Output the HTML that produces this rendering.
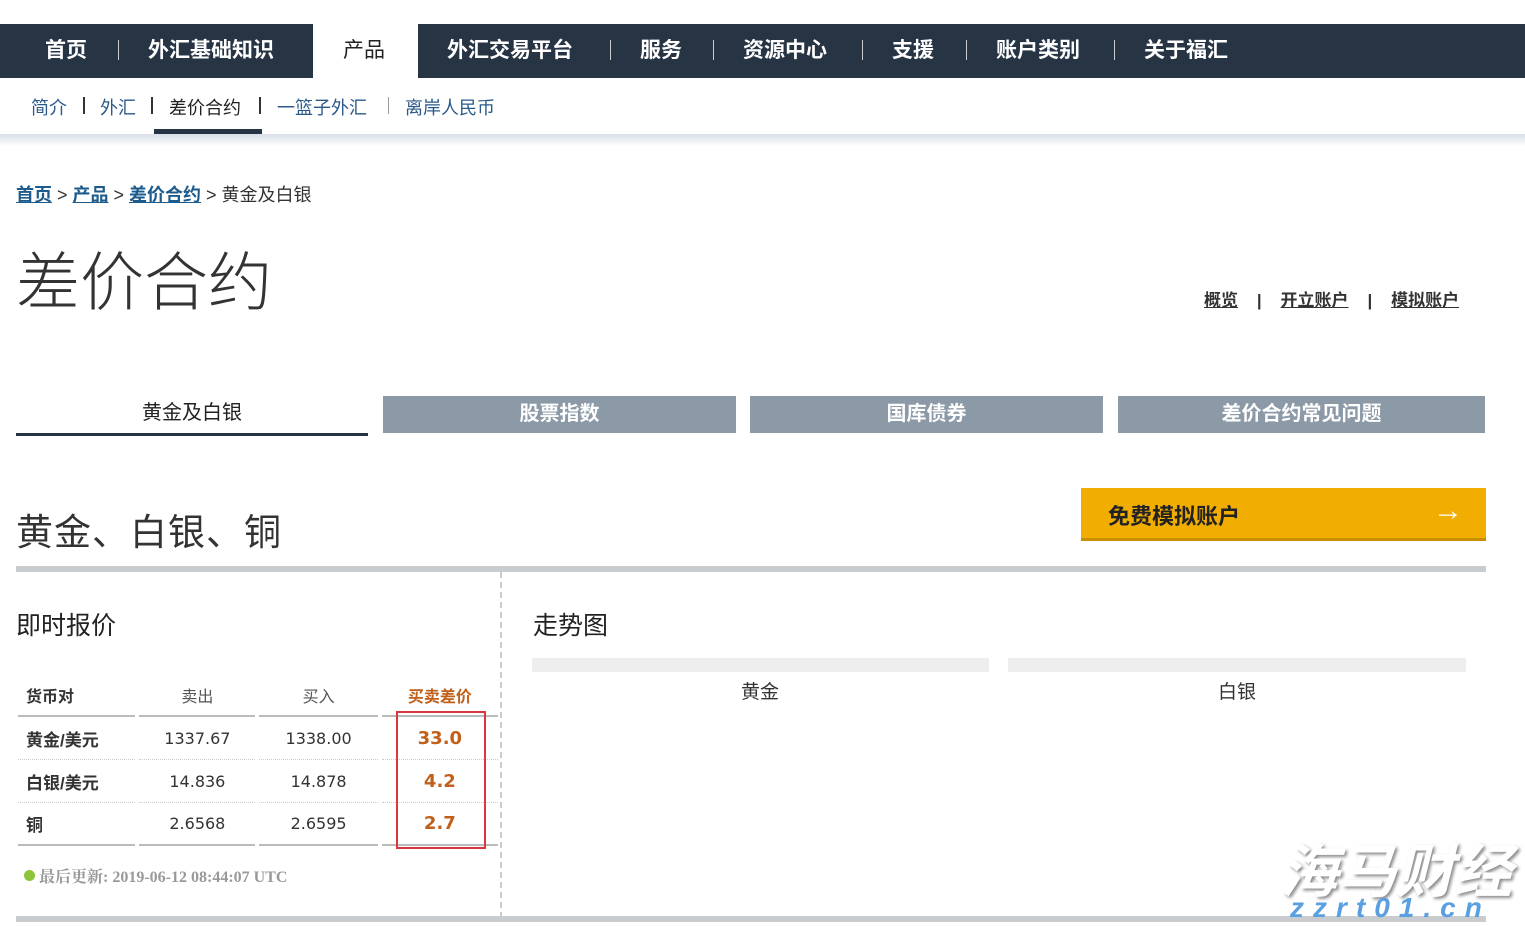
<!DOCTYPE html><html><head><meta charset="utf-8"><style>
*{margin:0;padding:0;box-sizing:border-box}
body{width:1525px;height:926px;overflow:hidden;background:#fff;font-family:"Liberation Sans","Noto Sans CJK SC",sans-serif;position:relative;color:#333}
.a{position:absolute;white-space:nowrap}
.nav{position:absolute;left:0;top:24px;width:1525px;height:54px;background:#263444}
.nv{position:absolute;top:24px;height:54px;line-height:54px;color:#fff;font-size:21px;font-weight:bold}
.sep{position:absolute;top:40px;width:1px;height:20px;background:#ccc}
.sub{position:absolute;top:94px;font-size:18px;color:#2b5a8a}
.ss{position:absolute;top:97px;width:2px;height:17px;background:#333}
.bc{font-size:18px;top:181px}
.bc u{color:#1c5b8c;font-weight:bold}
.tab{position:absolute;top:396px;height:37px;background:#8c9aa8;color:#fff;font-size:20px;font-weight:bold;text-align:center;line-height:37px}
td{font-size:16px;text-align:center;height:43px;padding:0}
.n{font-family:"DejaVu Sans",sans-serif;font-size:16px}
.o{color:#c0601a;font-weight:bold;font-family:"DejaVu Sans",sans-serif;font-size:18px}
</style></head><body>
<div class="nav"></div>
<div style="position:absolute;left:313px;top:24px;width:105px;height:54px;background:#fff"></div>
<div class="nv" style="left:45px">首页</div><div class="sep" style="left:118px"></div>
<div class="nv" style="left:148px">外汇基础知识</div>
<div class="nv" style="left:343px;color:#222;font-weight:normal">产品</div>
<div class="nv" style="left:447px">外汇交易平台</div><div class="sep" style="left:610px"></div>
<div class="nv" style="left:640px">服务</div><div class="sep" style="left:713px"></div>
<div class="nv" style="left:743px">资源中心</div><div class="sep" style="left:862px"></div>
<div class="nv" style="left:892px">支援</div><div class="sep" style="left:966px"></div>
<div class="nv" style="left:996px">账户类别</div><div class="sep" style="left:1114px"></div>
<div class="nv" style="left:1144px">关于福汇</div>
<div class="sub" style="left:31px">简介</div><div class="ss" style="left:83px"></div>
<div class="sub" style="left:100px">外汇</div><div class="ss" style="left:151px"></div>
<div class="sub" style="left:169px;color:#222">差价合约</div><div class="ss" style="left:259px"></div>
<div class="sub" style="left:277px">一篮子外汇</div><div class="ss" style="left:388px;width:1px;background:#999"></div>
<div class="sub" style="left:405px">离岸人民币</div>
<div style="position:absolute;left:154px;top:129px;width:108px;height:5px;background:#263444"></div>
<div style="position:absolute;left:0;top:134px;width:1525px;height:12px;background:linear-gradient(#d8dfe6,#fff)"></div>
<div class="a bc" style="left:16px"><u>首页</u> &gt; <u>产品</u> &gt; <u>差价合约</u> &gt; 黄金及白银</div>
<div class="a" style="left:16px;top:232px;font-size:64px;font-weight:300;color:#333">差价合约</div>
<div class="a" style="left:1204px;top:286px;font-size:17px;font-weight:bold;color:#333"><u>概览</u> &nbsp;&nbsp; | &nbsp;&nbsp; <u>开立账户</u> &nbsp;&nbsp; | &nbsp;&nbsp; <u>模拟账户</u></div>
<div class="a" style="left:16px;top:396px;width:352px;text-align:center;font-size:20px;line-height:35px;color:#222">黄金及白银</div>
<div style="position:absolute;left:16px;top:433px;width:352px;height:3px;background:#263444"></div>
<div class="tab" style="left:383px;width:353px">股票指数</div>
<div class="tab" style="left:750px;width:353px">国库债券</div>
<div class="tab" style="left:1118px;width:367px">差价合约常见问题</div>
<div class="a" style="left:16px;top:502px;font-size:37px;color:#333;letter-spacing:1px">黄金、白银、铜</div>
<div style="position:absolute;left:1081px;top:488px;width:405px;height:53px;background:#f2ae00;border-bottom:3px solid #c98f00"></div>
<div class="a" style="left:1108px;top:499px;font-size:22px;font-weight:bold;color:#222">免费模拟账户</div>
<div class="a" style="left:1433px;top:494px;font-size:30px;font-weight:bold;color:#fff">→</div>
<div style="position:absolute;left:16px;top:566px;width:1470px;height:6px;background:#c9cccf"></div>
<div style="position:absolute;left:500px;top:572px;height:346px;border-left:2px dashed #ccc"></div>
<div style="position:absolute;left:16px;top:916px;width:1470px;height:6px;background:#c9cccf"></div>
<div class="a" style="left:16px;top:606px;font-size:25px;color:#222">即时报价</div>
<div class="a" style="left:533px;top:606px;font-size:25px;color:#222">走势图</div>
<table style="position:absolute;left:14px;top:674px;width:488px;border-collapse:separate;border-spacing:4px 0;table-layout:fixed">
<colgroup><col style="width:117px"><col style="width:116px"><col style="width:118px"><col style="width:116px"></colgroup>
<tr><td style="text-align:left;padding-left:8px;font-weight:bold;border-bottom:2px solid #bbb">货币对</td><td style="border-bottom:2px solid #bbb;color:#555">卖出</td><td style="border-bottom:2px solid #bbb;color:#555">买入</td><td style="border-bottom:2px solid #bbb;color:#c0601a;font-weight:bold">买卖差价</td></tr>
<tr><td style="text-align:left;padding-left:8px;font-weight:bold;border-bottom:1px dotted #ccc;font-size:17px">黄金/美元</td><td class="n" style="border-bottom:1px dotted #ccc">1337.67</td><td class="n" style="border-bottom:1px dotted #ccc">1338.00</td><td class="o" style="border-bottom:1px dotted #ccc">33.0</td></tr>
<tr><td style="text-align:left;padding-left:8px;font-weight:bold;border-bottom:1px dotted #ccc;font-size:17px">白银/美元</td><td class="n" style="border-bottom:1px dotted #ccc">14.836</td><td class="n" style="border-bottom:1px dotted #ccc">14.878</td><td class="o" style="border-bottom:1px dotted #ccc">4.2</td></tr>
<tr><td style="text-align:left;padding-left:8px;font-weight:bold;border-bottom:2px solid #bbb;font-size:17px">铜</td><td class="n" style="border-bottom:2px solid #bbb">2.6568</td><td class="n" style="border-bottom:2px solid #bbb">2.6595</td><td class="o" style="border-bottom:2px solid #bbb">2.7</td></tr>
</table>
<div style="position:absolute;left:396px;top:711px;width:90px;height:138px;border:2px solid #d9363e"></div>
<div style="position:absolute;left:24px;top:870px;width:11px;height:11px;border-radius:50%;background:#8cc43c"></div>
<div class="a" style="left:39px;top:864px;font-size:16px;font-weight:bold;color:#999;font-family:'Liberation Serif','Noto Serif CJK SC',serif">最后更新: 2019-06-12 08:44:07 UTC</div>
<div style="position:absolute;left:532px;top:658px;width:457px;height:14px;background:#eee"></div>
<div style="position:absolute;left:1008px;top:658px;width:458px;height:14px;background:#eee"></div>
<div class="a" style="left:741px;top:677px;font-size:19px;color:#333">黄金</div>
<div class="a" style="left:1218px;top:677px;font-size:19px;color:#333">白银</div>
<div class="a" style="left:1280px;top:825px;font-size:58px;font-weight:bold;font-style:italic;color:#fff;text-shadow:2px 2px 3px #888">海马财经</div>
<div class="a" style="left:1290px;top:892px;font-size:28px;font-weight:bold;font-style:italic;color:#5a9fe0;letter-spacing:9px">zzrt01.cn</div>
</body></html>
